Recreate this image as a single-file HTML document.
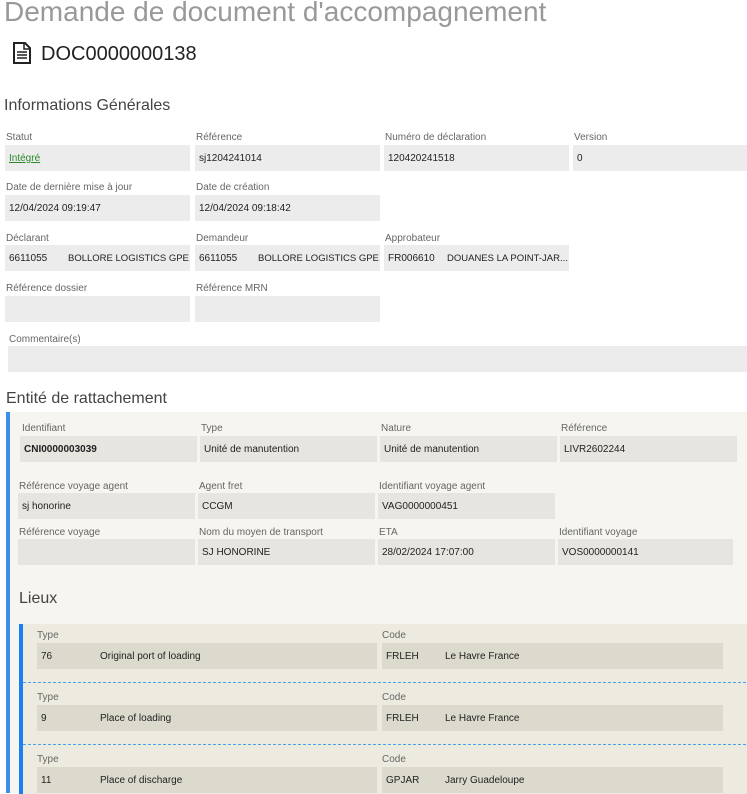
<!DOCTYPE html>
<html><head><meta charset="utf-8"><style>
*{margin:0;padding:0;box-sizing:border-box}
body{width:747px;height:793px;overflow:hidden;background:#fff;font-family:"Liberation Sans",sans-serif;position:relative;color:#222}
.a{position:absolute;white-space:nowrap}
.l{font-size:10px;color:#666}
.b{position:absolute;background:#ececec;font-size:10px;line-height:27px;padding-left:4px;white-space:nowrap;height:26px;color:#222;overflow:hidden}
.e .b{background:#e6e5e0}
.li .b{background:#dcdacd}
</style></head><body>
<div class="a" style="left:4px;top:-4px;font-size:28px;color:#999">Demande de document d'accompagnement</div>
<svg class="a" style="left:13px;top:42px" width="18" height="22" viewBox="0 0 18 22"><path d="M1 1h11l5 5v15H1z" fill="#fff" stroke="#222" stroke-width="2"/><path d="M11 1v6h6" fill="none" stroke="#222" stroke-width="1.5"/><path d="M4 10h10M4 13h10M4 16h10" stroke="#222" stroke-width="1.5"/></svg>
<div class="a" style="left:41px;top:43px;font-size:20px;color:#222">DOC0000000138</div>
<div class="a" style="left:4px;top:97px;font-size:16px;color:#444">Informations Générales</div>

<div class="a l" style="left:6px;top:132px">Statut</div><div class="b" style="left:5px;top:145px;width:185px"><span style="color:#2a8a2a;text-decoration:underline">Intégré</span></div>
<div class="a l" style="left:196px;top:132px">Référence</div><div class="b" style="left:195px;top:145px;width:185px">sj1204241014</div>
<div class="a l" style="left:385px;top:132px">Numéro de déclaration</div><div class="b" style="left:384px;top:145px;width:185px">120420241518</div>
<div class="a l" style="left:574px;top:132px">Version</div><div class="b" style="left:573px;top:145px;width:174px">0</div>

<div class="a l" style="left:6px;top:182px">Date de dernière mise à jour</div><div class="b" style="left:5px;top:195px;width:185px">12/04/2024 09:19:47</div>
<div class="a l" style="left:196px;top:182px">Date de création</div><div class="b" style="left:195px;top:195px;width:185px">12/04/2024 09:18:42</div>

<div class="a l" style="left:6px;top:233px">Déclarant</div><div class="b" style="left:5px;top:245px;width:185px">6611055<span class="a" style="left:63px;font-size:9.5px">BOLLORE LOGISTICS GPE</span></div>
<div class="a l" style="left:196px;top:233px">Demandeur</div><div class="b" style="left:195px;top:245px;width:185px">6611055<span class="a" style="left:63px;font-size:9.5px">BOLLORE LOGISTICS GPE</span></div>
<div class="a l" style="left:385px;top:233px">Approbateur</div><div class="b" style="left:384px;top:245px;width:185px">FR006610<span class="a" style="left:63px;font-size:9.5px">DOUANES LA POINT-JAR...</span></div>

<div class="a l" style="left:6px;top:283px">Référence dossier</div><div class="b" style="left:5px;top:296px;width:185px"></div>
<div class="a l" style="left:196px;top:283px">Référence MRN</div><div class="b" style="left:195px;top:296px;width:185px"></div>
<div class="a l" style="left:9px;top:334px">Commentaire(s)</div><div class="b" style="left:8px;top:346px;width:739px"></div>

<div class="a" style="left:6px;top:390px;font-size:16px;color:#444">Entité de rattachement</div>
<div class="e a" style="left:6px;top:412px;width:741px;height:381px;background:#f6f5ef;border-left:4px solid #3c8ee6">
<div class="a l" style="left:12px;top:11px">Identifiant</div><div class="b" style="left:10px;top:24px;width:177px;font-weight:bold">CNI0000003039</div>
<div class="a l" style="left:191px;top:11px">Type</div><div class="b" style="left:190px;top:24px;width:177px">Unité de manutention</div>
<div class="a l" style="left:371px;top:11px">Nature</div><div class="b" style="left:370px;top:24px;width:177px">Unité de manutention</div>
<div class="a l" style="left:551px;top:11px">Référence</div><div class="b" style="left:550px;top:24px;width:177px">LIVR2602244</div>

<div class="a l" style="left:9px;top:69px">Référence voyage agent</div><div class="b" style="left:8px;top:81px;width:177px">sj honorine</div>
<div class="a l" style="left:189px;top:69px">Agent fret</div><div class="b" style="left:188px;top:81px;width:177px">CCGM</div>
<div class="a l" style="left:369px;top:69px">Identifiant voyage agent</div><div class="b" style="left:368px;top:81px;width:177px">VAG0000000451</div>

<div class="a l" style="left:9px;top:115px">Référence voyage</div><div class="b" style="left:8px;top:127px;width:177px"></div>
<div class="a l" style="left:189px;top:115px">Nom du moyen de transport</div><div class="b" style="left:188px;top:127px;width:177px">SJ HONORINE</div>
<div class="a l" style="left:369px;top:115px">ETA</div><div class="b" style="left:368px;top:127px;width:177px">28/02/2024 17:07:00</div>
<div class="a l" style="left:549px;top:115px">Identifiant voyage</div><div class="b" style="left:548px;top:127px;width:175px">VOS0000000141</div>

<div class="a" style="left:9px;top:178px;font-size:16px;color:#444">Lieux</div>
<div class="li a" style="left:9px;top:212px;width:732px;height:170px;background:#edebdf;border-left:4px solid #1a7ff0">
 <div class="a l" style="left:14px;top:6px">Type</div><div class="b" style="left:14px;top:19px;width:340px">76<span class="a" style="left:63px">Original port of loading</span></div>
 <div class="a l" style="left:359px;top:6px">Code</div><div class="b" style="left:359px;top:19px;width:341px">FRLEH<span class="a" style="left:63px">Le Havre France</span></div>
 <div class="a" style="left:0;top:58px;width:728px;border-top:1px dashed #4aa0f0"></div>
 <div class="a l" style="left:14px;top:68px">Type</div><div class="b" style="left:14px;top:81px;width:340px">9<span class="a" style="left:63px">Place of loading</span></div>
 <div class="a l" style="left:359px;top:68px">Code</div><div class="b" style="left:359px;top:81px;width:341px">FRLEH<span class="a" style="left:63px">Le Havre France</span></div>
 <div class="a" style="left:0;top:120px;width:728px;border-top:1px dashed #4aa0f0"></div>
 <div class="a l" style="left:14px;top:130px">Type</div><div class="b" style="left:14px;top:143px;width:340px">11<span class="a" style="left:63px">Place of discharge</span></div>
 <div class="a l" style="left:359px;top:130px">Code</div><div class="b" style="left:359px;top:143px;width:341px">GPJAR<span class="a" style="left:63px">Jarry Guadeloupe</span></div>
</div>
</div>
</body></html>
